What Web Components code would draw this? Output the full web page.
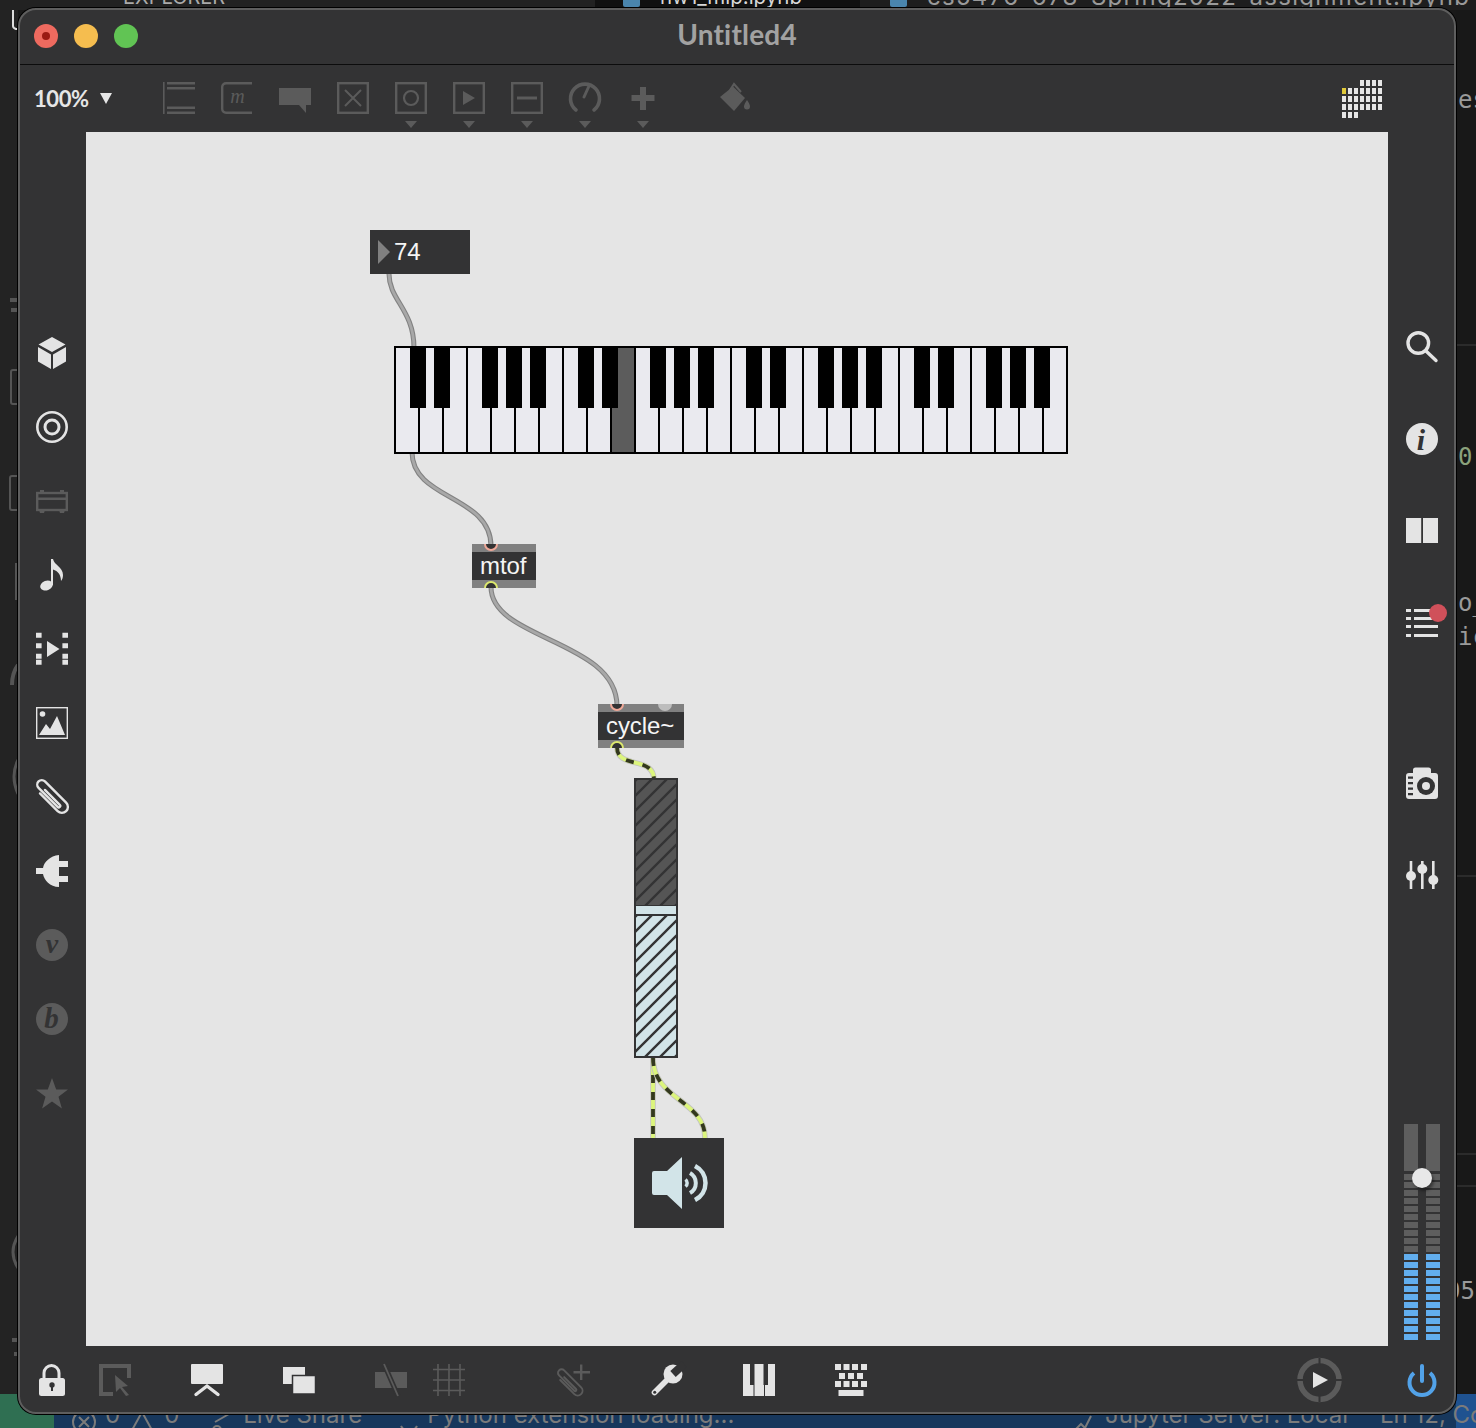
<!DOCTYPE html>
<html>
<head>
<meta charset="utf-8">
<title>Untitled4</title>
<style>
    html, body { margin: 0; padding: 0; background: #1c1c1c; }
    body { width: 1476px; height: 1428px; position: relative; overflow: hidden; font-family: "Lato", "Liberation Sans", sans-serif; }
</style>
</head>
<body>
<desk-backdrop></desk-backdrop>

<max-window>
    <span slot="title">Untitled4</span>

    <max-toolbar slot="toolbar">
        <tool-icon name="object" dim style="margin-left:50px"></tool-icon>
        <tool-icon name="message" dim></tool-icon>
        <tool-icon name="comment" dim></tool-icon>
        <tool-icon name="button" dim></tool-icon>
        <tool-icon name="toggle" dim menu></tool-icon>
        <tool-icon name="number" dim menu></tool-icon>
        <tool-icon name="slider" dim menu></tool-icon>
        <tool-icon name="dial" dim menu></tool-icon>
        <tool-icon name="plus" dim menu></tool-icon>
        <tool-icon name="bucket" dim style="margin-left:34px"></tool-icon>
    </max-toolbar>

    <side-bar slot="left" top="205" gap="42" style="padding-right:2px">
        <tool-icon name="cube"></tool-icon>
        <tool-icon name="target"></tool-icon>
        <tool-icon name="rack" dim></tool-icon>
        <tool-icon name="note"></tool-icon>
        <tool-icon name="film"></tool-icon>
        <tool-icon name="image"></tool-icon>
        <tool-icon name="clip"></tool-icon>
        <tool-icon name="plug"></tool-icon>
        <tool-icon name="vst" dim></tool-icon>
        <tool-icon name="beap" dim></tool-icon>
        <tool-icon name="star" dim></tool-icon>
    </side-bar>

    <patch-canvas slot="canvas">
        <max-object x="284" y="98" w="100" h="44" kind="number">74</max-object>
        <kslider-object x="308" y="214"></kslider-object>
        <max-object x="386" y="412" w="64" h="44" inlets="19">mtof</max-object>
        <max-object x="512" y="572" w="86" h="44" inlets="19 67">cycle~</max-object>
        <gain-object x="548" y="646"></gain-object>
        <ezdac-object x="548" y="1006"></ezdac-object>
    </patch-canvas>

    <side-bar slot="right" top="199" gap="60" style="padding-left:2px">
        <tool-icon name="search"></tool-icon>
        <tool-icon name="info"></tool-icon>
        <tool-icon name="book"></tool-icon>
        <tool-icon name="list"></tool-icon>
        <tool-icon name="camera" style="margin-top:68px"></tool-icon>
        <tool-icon name="mixer"></tool-icon>
        <level-meter></level-meter>
    </side-bar>

    <max-statusbar slot="bottom">
        <tool-icon name="lock" style="margin-left:16px"></tool-icon>
        <tool-icon name="select" dim style="margin-left:31px"></tool-icon>
        <tool-icon name="present" style="margin-left:60px"></tool-icon>
        <tool-icon name="windows" style="margin-left:60px"></tool-icon>
        <tool-icon name="snap" dim style="margin-left:60px"></tool-icon>
        <tool-icon name="grid" dim style="margin-left:26px"></tool-icon>
        <tool-icon name="clipadd" dim style="margin-left:94px"></tool-icon>
        <tool-icon name="wrench" style="margin-left:60px"></tool-icon>
        <tool-icon name="keys" style="margin-left:60px"></tool-icon>
        <tool-icon name="keyboard" style="margin-left:60px"></tool-icon>
        <tool-icon name="play" size="44" style="margin-left:430px"></tool-icon>
        <tool-icon name="power" style="margin-left:65px"></tool-icon>
    </max-statusbar>
</max-window>

<script>
const DARK = '#333334'

const f = 'fill="currentColor"'
const s = 'fill="none" stroke="currentColor"'
const boxed = `<rect x="1.200" y="1.200" width="29.600" height="29.600" ${s} stroke-width="2.400"/>`
const serif = 'font-family="Liberation Serif, serif" font-style="italic" font-weight="bold" text-anchor="middle"'
const clipShape = `<g transform="rotate(-45 16 16)" ${s} stroke-width="2.400" stroke-linecap="round"><path d="M10 5V30a6 6 0 0 0 12 0V0a4.500 4.500 0 0 0-9 0V27a1.500 1.500 0 0 0 3 0V6"/></g>`

const ICONS = {
    object: `<path ${f} d="M0 0h1.600v32H0zM4 0h28v2.400H4zM4 5h28v2.400H4zM4 24.600h28v2.400H4zM4 29.600h28v2.400H4z"/>`,
    message: `<path ${s} stroke-width="2.400" d="M31 1.200H5A3.800 3.800 0 0 0 1.200 5v22A3.800 3.800 0 0 0 5 30.800h26"/><text x="16.500" y="21" font-family="Liberation Serif, serif" font-style="italic" font-size="20" text-anchor="middle" fill="currentColor">m</text>`,
    comment: `<path ${f} d="M0 6h32v17h-5v8l-7-8H0z"/>`,
    button: `${boxed}<path ${s} stroke-width="2" d="M8 8l16 16M24 8L8 24"/>`,
    toggle: `${boxed}<circle cx="16" cy="16" r="7" ${s} stroke-width="2.200"/>`,
    number: `${boxed}<path ${f} d="M10 9l12 7-12 7z"/>`,
    slider: `${boxed}<path ${f} d="M6 14.500h20v3H6z"/>`,
    dial: `<path ${s} stroke-width="3.600" stroke-linecap="round" d="M7 28A14.500 14.500 0 1 1 25 28"/><path ${s} stroke-width="3" stroke-linecap="round" d="M15 15L20 4"/>`,
    plus: `<path ${f} d="M13 5h6v8h8.500v6H19v9h-6V19H4.500v-6H13z"/>`,
    bucket: `<path ${f} d="M1 15L14 4.500 26 16 15 29z"/><path ${s} stroke-width="2" d="M11 8l4-6 7 8"/><path ${f} d="M28 18c2 3 3 5 3 6.500a3 3 0 0 1-6 0c0-1.500 1-3.500 3-6.500z"/>`,

    cube: `<path ${f} d="M16 0l13.500 7.500L16 15 2.500 7.500zM2 10l13 7.500V32L2 24.500zM30 10v14.500L17 32V17.500z"/>`,
    target: `<circle cx="16" cy="16" r="14.700" ${s} stroke-width="2.600"/><circle cx="16" cy="16" r="7" ${s} stroke-width="3"/>`,
    rack: `<rect x="1.200" y="8" width="29.600" height="17" ${s} stroke-width="2.400"/><path ${f} d="M1 12.500h30v2.400H1zM4 5h4v3H4zM24 5h4v3h-4zM3 25h6l-1 3H4zM23 25h6l-1 3h-4z"/>`,
    note: `<ellipse cx="10.500" cy="26.500" rx="6.500" ry="4.800" transform="rotate(-20 10.500 26.500)" ${f}/><path ${f} d="M15 0h2c1 6 10 8 10 16 0 3-1 5-2 6 0-6-3-10-8-11.500V26h-2z"/>`,
    film: `<path ${f} d="M0 0h5.600v5H0zM0 10.500h5.600v5H0zM0 21h5.600v5H0zM26.400 0H32v5h-5.600zM26.400 10.500H32v5h-5.600zM26.400 21H32v5h-5.600zM0 27h5.600v5H0zM26.400 27H32v5h-5.600z" transform="translate(0 -0.300)"/><path ${f} d="M11 8l12.500 8L11 24z"/>`,
    image: `<rect x="0.700" y="0.700" width="30.600" height="30.600" ${s} stroke-width="1.400"/><circle cx="6.500" cy="7" r="2.800" ${f}/><path ${f} d="M3 28l7-11 4 5 7-13 8 19z"/>`,
    clip: clipShape,
    plug: `<path ${f} d="M0 13h8v6H0zM23 0v32c-9 0-15-7-16-13v-6C8 7 14 1 23 0zM23 6h9v6h-9zM23 21h9v6h-9z"/>`,
    vst: `<circle cx="16" cy="16" r="16" ${f}/><text x="16" y="24" ${serif} font-size="28" fill="${DARK}">v</text>`,
    beap: `<circle cx="16" cy="16" r="16" ${f}/><text x="15.500" y="25" ${serif} font-size="29" fill="${DARK}">b</text>`,
    star: `<path ${f} d="M16 1l4.200 11.600H32l-9.500 7.200 3.400 11.700L16 24.500 6.100 31.500l3.400-11.700L0 12.600h11.800z"/>`,

    search: `<circle cx="12.300" cy="12" r="10.300" ${s} stroke-width="3.400"/><path ${s} stroke-width="3.400" stroke-linecap="round" d="M20 20l10 9.500"/>`,
    info: `<circle cx="16" cy="16" r="16" ${f}/><text x="15" y="27" ${serif} font-size="30" fill="${DARK}">i</text>`,
    book: `<path ${f} d="M0 3h15.200v25H0zM17 3h15v25H17z"/>`,
    list: `<path ${f} d="M0 2h5v3H0zM8 2h24v3H8zM0 10h5v3H0zM8 10h24v3H8zM0 18h5v3H0zM8 18h24v3H8zM0 27h5v3H0zM8 27h24v3H8z"/><circle cx="32" cy="6" r="9" fill="#d0505a"/>`,
    camera: `<path ${f} d="M3 6h4V3a2.500 2.500 0 0 1 2.500-2.500h13A2.500 2.500 0 0 1 25 3v3h4a3 3 0 0 1 3 3v20a3 3 0 0 1-3 3H3a3 3 0 0 1-3-3V9a3 3 0 0 1 3-3z"/><circle cx="20" cy="19" r="9" fill="${DARK}"/><circle cx="20" cy="19" r="4" ${f}/><path fill="${DARK}" d="M2 9.500h5v2.200H2zM2 15h5v2.200H2zM2 20.500h5v2.200H2zM2 26h5v2.200H2z"/>`,
    mixer: `<path ${f} d="M3.700 2h2.600v28H3.700zM15 2h2.600v28H15zM26 2h2.600v28H26z"/><circle cx="5" cy="17" r="5" ${f}/><circle cx="16.300" cy="10" r="5" ${f}/><circle cx="27.300" cy="21" r="5" ${f}/>`,

    lock: `<path ${s} stroke-width="3" d="M8 15V9a7.500 7.500 0 0 1 15 0v6"/><rect x="3" y="14" width="26" height="18" rx="2.500" ${f}/><circle cx="16" cy="21" r="2.700" fill="${DARK}"/><path fill="${DARK}" d="M15 22h2v5h-2z"/>`,
    select: `<path ${s} stroke-width="4" d="M14 30H2V2h28v12"/><path ${f} d="M16 11l13 11-6 1 7 8-3 1-6-8-4 4z"/>`,
    present: `<rect x="0" y="0" width="32" height="20" rx="1" ${f}/><path ${s} stroke-width="3.400" stroke-linecap="round" d="M16 22L5 30.500M16 22l11 8.500"/>`,
    windows: `<rect x="0" y="3" width="22" height="17" ${f}/><rect x="9.500" y="11.500" width="23" height="18.500" ${f} stroke="${DARK}" stroke-width="1.500"/>`,
    snap: `<rect x="0" y="8" width="32" height="16" ${f}/><path stroke="${DARK}" stroke-width="5" d="M9 0l14 32"/><path stroke="currentColor" stroke-width="1.800" d="M9 0l14 32"/>`,
    grid: `<path ${s} stroke-width="1.600" d="M5 0v32M16 0v32M27 0v32M0 5.500h32M0 16h32M0 26.500h32"/>`,
    clipadd: `<g transform="translate(-2 6) scale(.8)">${clipShape}</g><path ${f} d="M21 0.500h2.400V7H31v2.400h-7.600V16H21V9.400h-6.500V7H21z"/>`,
    wrench: `<path ${s} stroke-width="5.600" stroke-linecap="round" d="M3.500 28.500L18 14"/><circle cx="22" cy="10" r="9.500" ${f}/><path stroke="${DARK}" stroke-width="8" d="M22 10L33 0"/><circle cx="3.700" cy="28.300" r="1.500" fill="${DARK}"/>`,
    keys: `<path ${f} d="M0 0h32v32H0z"/><path fill="${DARK}" d="M7 0h4.500v21H7zM20.500 0H25v21h-4.500zM10.500 21h1v11h-1zM21 21h1v11h-1z"/>`,
    keyboard: `<path ${f} d="M0 0h6v6H0zM8.500 0h6v6h-6zM17 0h6v6h-6zM26 0h6v6h-6zM4 9h6v6H4zM13 9h6v6h-6zM22 9h6v6h-6zM0 17h6v6H0zM8.500 17h6v6h-6zM17 17h6v6h-6zM26 17h6v6h-6zM3.500 26h25v6h-25z"/>`,
    play: `<circle cx="22.500" cy="22" r="19.500" fill="none" stroke="#5b5b5b" stroke-width="5.500"/><path stroke="${DARK}" stroke-width="2" d="M22.500 0v8M22.500 36v8M0 22h8M37 22h8"/><path ${f} d="M16 15l15 8-15 8z" transform="translate(0 -1)"/>`,
    power: `<g fill="none" stroke="#52a2e8" stroke-width="4" stroke-linecap="round"><path d="M8 9A12.500 12.500 0 1 0 24 9" stroke-linecap="butt"/><path d="M16 2v15"/></g>`,
}

class ToolIcon extends HTMLElement {
    connectedCallback() {
        const name = this.getAttribute('name')
        const size = this.getAttribute('size') || 32
        const color = this.hasAttribute('dim') ? '#5b5b5b' : '#e4e4e4'
        const shadow = this.attachShadow({ mode: 'open' })
        shadow.innerHTML = `
            <style>
                :host { display: flex; flex-direction: column; align-items: center; gap: 7px; flex: none; color: ${color}; }
                svg { display: block; overflow: visible; }
                .menu { width: 0; height: 0; border-left: 6.5px solid transparent; border-right: 6.5px solid transparent; border-top: 7px solid #5b5b5b; }
            </style>
            <svg width="${size}" height="${size}" viewBox="0 0 ${size} ${size}">${ICONS[name]}</svg>
            ${this.hasAttribute('menu') ? '<div class="menu"></div>' : ''}
        `
    }
}
customElements.define('tool-icon', ToolIcon)

class DeskBackdrop extends HTMLElement {
    constructor() {
        super()
        const shadow = this.attachShadow({ mode: 'open' })
        shadow.innerHTML = `
            <style>
                :host { display: flex; flex-direction: column; width: 1476px; height: 1428px; background: #191919; overflow: hidden; font-family: "Inter", "Liberation Sans", sans-serif; }
                .tabs { display: flex; height: 10px; flex: none; background: #1e1e1e; color: #9a9a9a; font-size: 24px; line-height: 24px; }
                .tabs span { display: block; margin-top: -15px; white-space: nowrap; }
                .explorer { width: 595px; background: #222; flex: none; padding-left: 123px; box-sizing: border-box; font-size: 20px; color: #aaa; }
                .tab { width: 265px; flex: none; background: #111; display: flex; padding-left: 28px; box-sizing: border-box; gap: 20px; color: #d8d8d8; font-size: 20.500px; }
                .file { width: 17px; height: 7px; background: #4a85ad; border-radius: 0 0 2px 2px; flex: none; }
                .other { display: flex; padding-left: 30px; gap: 20px; letter-spacing: 1.300px; }
                .main { flex: 1; display: flex; justify-content: space-between; min-height: 0; }
                .activity { width: 18px; background: #232323; color: #555; }
                .code { width: 20px; flex: none; position: relative; background: #181818; font-family: "DejaVu Sans Mono", monospace; font-size: 24px; color: #9a9a9a; }
                .code span { position: absolute; left: 2px; line-height: 28px; white-space: nowrap; }
                .code i { position: absolute; left: 0; right: 0; height: 2px; background: #2b2b2b; }
                .status { height: 34px; flex: none; display: flex; background: #17375c; color: #7b7b7b; font-size: 24px; line-height: 30px; position: relative; }
                .status .green { width: 54px; flex: none; background: #2f6f52; }
                .status .row { flex: 1; display: flex; align-items: flex-end; padding-left: 18px; white-space: nowrap; position: relative; }
                .status .row span { display: block; transform: translateY(2px); }
                .status .row svg { flex: none; margin-bottom: -6px; }
                .status .brand { position: absolute; right: 0; top: 0; bottom: 0; width: 20px; background: #1f5290; }
                .spacer { flex: 1; }
            </style>
            <div class="tabs">
                <span class="explorer">EXPLORER</span>
                <div class="tab"><div class="file"></div><span>hw1_mlp.ipynb</span></div>
                <div class="other"><div class="file"></div><span>cs5476-678-Spring2022-assignment.ipynb</span></div>
            </div>
            <div class="main">
                <div class="activity">
                    <svg width="18" height="1384" viewBox="0 0 18 1384" fill="none" stroke="#555" stroke-width="2">
                        <path stroke="#ddd" d="M13 -10V16q0 2 3 3h4M24 -10V-2M52 -10V-2"/>
                        <path d="M18 360h-5q-2 0-2 2v30q0 2 2 2h5M18 466h-6q-2 0-2 2v30q0 2 2 2h6M16 553v37"/>
                        <path stroke-width="4" d="M18 655q-6 8-6 20"/>
                        <path stroke-width="3" d="M18 750q-8 16 0 34M18 1226q-10 16 0 32"/>
                        <path stroke-width="4" d="M10 290h8M11 300h7M12 1330h6M14 1344h4"/>
                    </svg>
                </div>
                <div class="code">
                    <i style="top:334px"></i><i style="top:865px"></i><i style="top:1143px"></i><i style="top:1175px"></i>
                    <span style="top:76px">es</span>
                    <span style="top:433px;color:#8ba27c">0</span>
                    <span style="top:579px">o_</span>
                    <span style="top:613px">ic</span>
                    <span style="top:1267px;left:-10px">05.</span>
                </div>
            </div>
            <div class="status">
                <div class="brand"></div>
                <div class="green"></div>
                <div class="row">
                    <svg width="24" height="24" viewBox="0 0 24 24" fill="none" stroke="#7b7b7b" stroke-width="2"><circle cx="12" cy="12" r="11"/><path d="M7 7l10 10M17 7L7 17"/></svg>
                    <span style="margin-left:9px">0</span>
                    <svg style="margin-left:10px" width="24" height="24" viewBox="0 0 24 24" fill="none" stroke="#7b7b7b" stroke-width="2"><path d="M12 2l11 20H1z"/></svg>
                    <span style="margin-left:10px">0</span>
                    <svg style="margin-left:30px" width="24" height="24" viewBox="0 0 24 24" fill="none" stroke="#7b7b7b" stroke-width="2"><circle cx="8" cy="20" r="4"/><path d="M6 12l14-8"/></svg>
                    <span style="margin-left:10px">Live Share</span>
                    <svg style="margin-left:36px" width="22" height="24" viewBox="0 0 22 24" fill="none" stroke="#7b7b7b" stroke-width="2"><path d="M3 16a9 9 0 0 0 16 0"/></svg>
                    <span style="margin-left:7px">Python extension loading...</span>
                    <div class="spacer"></div>
                    <svg width="22" height="24" viewBox="0 0 22 24" fill="none" stroke="#7b7b7b" stroke-width="2"><path d="M2 22l8-8 4 4 6-12"/></svg>
                    <span style="margin-left:12px">Jupyter Server: Local</span>
                    <span style="margin-left:32px;width:96px;overflow:hidden">Ln 12, Col 1</span>
                </div>
            </div>
        `
    }
}
customElements.define('desk-backdrop', DeskBackdrop)

class MaxWindow extends HTMLElement {
    constructor() {
        super()
        const shadow = this.attachShadow({ mode: 'open' })
        shadow.innerHTML = `
            <style>
                :host {
                    position: absolute; left: 18px; top: 8px; width: 1438px; height: 1406px; box-sizing: border-box;
                    display: grid; grid-template-columns: 66px 1fr 66px; grid-template-rows: 54px 1px 67px 1fr 66px;
                    background: ${DARK}; border: 2px solid #5e5e5e; border-radius: 18px;
                    box-shadow: 0 0 0 1px #000; overflow: hidden;
                }
                .title { grid-column: 1 / 4; display: flex; align-items: center; position: relative; justify-content: center;
                    color: #a2a2a2; font: bold 28px "Lato", "Liberation Sans", sans-serif; letter-spacing: 0.200px; padding-bottom: 7px; box-sizing: border-box; }
                .lights { position: absolute; left: 14px; top: 14px; display: flex; gap: 16px; }
                .lights div { width: 24px; height: 24px; border-radius: 50%; display: flex; align-items: center; justify-content: center; }
                .red { background: #ee6a5f; } .yellow { background: #f5bd4f; } .green { background: #61c454; }
                .red::after { content: ''; width: 8px; height: 8px; border-radius: 50%; background: #9b1a13; }
                .line { grid-column: 1 / 4; background: #0c0c0c; }
                .top { grid-column: 1 / 4; }
                .bottom { grid-column: 1 / 4; }
            </style>
            <div class="title">
                <div class="lights"><div class="red"></div><div class="yellow"></div><div class="green"></div></div>
                <slot name="title"></slot>
            </div>
            <div class="line"></div>
            <div class="top"><slot name="toolbar"></slot></div>
            <slot name="left"></slot>
            <slot name="canvas"></slot>
            <slot name="right"></slot>
            <div class="bottom"><slot name="bottom"></slot></div>
        `
    }
}
customElements.define('max-window', MaxWindow)

class MaxToolbar extends HTMLElement {
    constructor() {
        super()
        const shadow = this.attachShadow({ mode: 'open' })
        shadow.innerHTML = `
            <style>
                :host { display: flex; height: 67px; box-sizing: border-box; padding: 17px 0 0 14px; position: relative; }
                .zoom { display: flex; align-items: center; height: 32px; gap: 11px; color: #e6e6e6; font: bold 22px "Lato", "Liberation Sans", sans-serif; letter-spacing: -0.4px; }
                .zoom::after { content: ''; width: 0; height: 0; border-left: 6px solid transparent; border-right: 6px solid transparent; border-top: 11px solid #e6e6e6; }
                .icons { display: flex; gap: 26px; align-items: flex-start; margin-left: 1px; }
                .patcher { position: absolute; right: 72px; top: 15px; display: grid; grid-template-columns: repeat(7, 4px); grid-auto-rows: 6px; gap: 2px; }
                .patcher i { background: #e6e6e6; }
            </style>
            <div class="zoom">100%</div>
            <div class="icons"><slot></slot></div>
            <div class="patcher"></div>
        `
        const grid = shadow.querySelector('.patcher')
        const rows = ['...xxxx', 'xxxxxxx', 'xxxxxxx', 'xxxxxxx', 'xxx....']
        rows.forEach((row, r) => {
            [...row].forEach((c, i) => {
                const cell = document.createElement('i')
                if (c === '.') cell.style.background = 'transparent'
                if (r === 1 && i === 0) cell.style.background = '#e0c93a'
                grid.appendChild(cell)
            })
        })
    }
}
customElements.define('max-toolbar', MaxToolbar)

class SideBar extends HTMLElement {
    connectedCallback() {
        const shadow = this.attachShadow({ mode: 'open' })
        shadow.innerHTML = `
            <style>
                :host { display: flex; flex-direction: column; align-items: center; min-height: 0;
                    padding-top: ${this.getAttribute('top')}px; gap: ${this.getAttribute('gap')}px; box-sizing: border-box; }
            </style>
            <slot></slot>
        `
    }
}
customElements.define('side-bar', SideBar)

class MaxStatusbar extends HTMLElement {
    constructor() {
        super()
        const shadow = this.attachShadow({ mode: 'open' })
        shadow.innerHTML = `
            <style>
                :host { display: flex; align-items: center; height: 66px; box-sizing: border-box; padding-top: 2px; }
            </style>
            <slot></slot>
        `
    }
}
customElements.define('max-statusbar', MaxStatusbar)

class LevelMeter extends HTMLElement {
    constructor() {
        super()
        const shadow = this.attachShadow({ mode: 'open' })
        const column = () => {
            let cells = '<div class="head"></div>'
            for (let i = 0; i < 10; i++) cells += '<i></i>'
            for (let i = 0; i < 11; i++) cells += '<i class="on"></i>'
            return `<div class="col">${cells}</div>`
        }
        shadow.innerHTML = `
            <style>
                :host { display: flex; gap: 8px; position: relative; margin-top: auto; margin-bottom: 6px; }
                .col { display: flex; flex-direction: column; gap: 2px; width: 14px; }
                .head { height: 47px; background: #5e5e5e; margin-bottom: 1px; }
                i { display: block; height: 6px; background: #5e5e5e; }
                i.on { background: #62aeee; }
                .knob { position: absolute; left: 8px; top: 44px; width: 20px; height: 20px; border-radius: 50%; background: #e8e8e8; box-shadow: 2px 3px 3px rgba(0,0,0,.4); }
            </style>
            ${column()}${column()}
            <div class="knob"></div>
        `
    }
}
customElements.define('level-meter', LevelMeter)

class PatchCanvas extends HTMLElement {
    constructor() {
        super()
        const shadow = this.attachShadow({ mode: 'open' })
        // cords use window coordinates, so the viewBox starts at the canvas corner
        const grey = [
            'M389 274C389 300 414 310 414 348',
            'M412 452C412 500 491 495 491 546',
            'M491 587C491 640 617 640 617 706',
        ]
        const signal = [
            'M617 747C617 770 654 755 654 780',
            'M653 1058V1138',
            'M653 1058C653 1100 705 1100 705 1138',
        ]
        const cords = grey.map(d => `
            <path d="${d}" stroke="#828282" stroke-width="5"/>
            <path d="${d}" stroke="#a8a8a8" stroke-width="2.800"/>`).join('') + signal.map(d => `
            <path d="${d}" stroke="#c4c4c0" stroke-width="5.600"/>
            <path d="${d}" stroke="#dcf57c" stroke-width="3.800"/>
            <path d="${d}" stroke="#33381f" stroke-width="3.800" stroke-dasharray="8 9"/>`).join('')
        shadow.innerHTML = `
            <style>
                :host { display: block; position: relative; background: #e5e5e5; overflow: hidden; }
                svg { position: absolute; left: 0; top: 0; }
            </style>
            <svg width="1302" height="1214" viewBox="86 132 1302 1214" fill="none">${cords}</svg>
            <slot></slot>
        `
    }
}
customElements.define('patch-canvas', PatchCanvas)

class MaxObject extends HTMLElement {
    connectedCallback() {
        const shadow = this.attachShadow({ mode: 'open' })
        const kind = this.getAttribute('kind')
        const inlets = (this.getAttribute('inlets') || '').split(' ').filter(Boolean)
        const ports = inlets.map((x, i) => `<div class="port ${i ? 'off' : 'in'}" style="left:${x - 7}px"></div>`).join('')
        const band = kind === 'number'
            ? ''
            : `${ports}<div class="port out" style="left:${inlets[0] - 7}px"></div>`
        shadow.innerHTML = `
            <style>
                :host {
                    position: absolute; left: ${this.getAttribute('x')}px; top: ${this.getAttribute('y')}px;
                    width: ${this.getAttribute('w')}px; height: ${this.getAttribute('h')}px; box-sizing: border-box;
                    background: ${DARK}; color: #f5f5f5; display: flex; align-items: center;
                    font: 24px "Liberation Sans", Arial, sans-serif; letter-spacing: -0.1px;
                    padding-left: ${kind === 'number' ? 24 : 8}px;
                    ${kind === 'number' ? '' : 'border-top: 8px solid #808080; border-bottom: 8px solid #808080;'}
                }
                .port { position: absolute; width: 10px; height: 10px; border-radius: 50%; background: ${DARK}; }
                .in { top: -7px; border: 2px solid #f0a898; }
                .out { bottom: -7px; border: 2px solid #dce86e; }
                .off { top: -7px; width: 14px; height: 14px; background: #bdbdbd; }
                .arrow { position: absolute; left: 8px; top: 10px; width: 0; height: 0; border-top: 12px solid transparent; border-bottom: 12px solid transparent; border-left: 12px solid #808080; }
                .clip { position: absolute; inset: -8px 0; overflow: hidden; }
            </style>
            <slot></slot>
            ${kind === 'number' ? '<div class="arrow"></div>' : `<div class="clip">${band}</div>`}
        `
    }
}
customElements.define('max-object', MaxObject)

class KsliderObject extends HTMLElement {
    connectedCallback() {
        const shadow = this.attachShadow({ mode: 'open' })
        const blackOffsets = [16, 40, 88, 112, 136]
        let keys = ''
        for (let i = 0; i < 28; i++) {
            const on = i === 9
            keys += `<rect x="${i * 24}" y="0" width="24" height="108" fill="${on ? '#5c5c5c' : '#eaeaef'}"/>`
            keys += `<rect x="${i * 24}" y="0" width="2" height="108" fill="#000"/>`
        }
        for (let oct = 0; oct < 4; oct++) {
            blackOffsets.forEach(b => {
                keys += `<rect x="${oct * 168 + b}" y="0" width="16" height="62" fill="#000"/>`
            })
        }
        // the played key keeps its colour up between the neighbouring black keys
        keys += `<rect x="224" y="0" width="16" height="62" fill="#5c5c5c"/>`
        shadow.innerHTML = `
            <style>
                :host { position: absolute; left: ${this.getAttribute('x')}px; top: ${this.getAttribute('y')}px; width: 674px; height: 108px; }
                svg { display: block; }
            </style>
            <svg width="674" height="108" viewBox="0 0 674 108">
                ${keys}
                <rect x="1" y="1" width="672" height="106" fill="none" stroke="#000" stroke-width="2"/>
            </svg>
        `
    }
}
customElements.define('kslider-object', KsliderObject)

class GainObject extends HTMLElement {
    connectedCallback() {
        const shadow = this.attachShadow({ mode: 'open' })
        const hatch = (id, bg) => `
            <pattern id="${id}" width="15" height="15" patternUnits="userSpaceOnUse">
                <rect width="15" height="15" fill="${bg}"/>
                <path d="M-3 3L3 -3M-3 18L18 -3M12 18L18 12" stroke="${DARK}" stroke-width="2.400"/>
            </pattern>`
        shadow.innerHTML = `
            <style>
                :host {
                    position: absolute; left: ${this.getAttribute('x')}px; top: ${this.getAttribute('y')}px;
                    width: 44px; height: 280px; box-sizing: border-box; border: 2px solid ${DARK};
                    display: flex; flex-direction: column; background: ${DARK};
                }
                svg { display: block; flex: none; }
                .knob { height: 8px; margin: 1px 0 2px; background: #d2e4e8; flex: none; }
            </style>
            <svg width="40" height="125"><defs>${hatch('up', '#555')}</defs><rect width="40" height="125" fill="url(#up)"/></svg>
            <div class="knob"></div>
            <svg width="40" height="140"><defs>${hatch('low', '#d2e4e8')}</defs><rect width="40" height="140" fill="url(#low)"/></svg>
        `
    }
}
customElements.define('gain-object', GainObject)

class EzdacObject extends HTMLElement {
    connectedCallback() {
        const shadow = this.attachShadow({ mode: 'open' })
        shadow.innerHTML = `
            <style>
                :host {
                    position: absolute; left: ${this.getAttribute('x')}px; top: ${this.getAttribute('y')}px;
                    width: 90px; height: 90px; background: ${DARK}; display: flex; align-items: center; justify-content: center;
                }
                svg { display: block; }
            </style>
            <svg width="90" height="90" viewBox="0 0 90 90">
                <path fill="#d2e4e8" d="M18 35a2 2 0 0 1 2-2h13l15-14v52L33 57H20a2 2 0 0 1-2-2z"/>
                <g fill="none" stroke="#d2e4e8">
                    <path d="M51.500 41.500a4.500 4.500 0 0 1 0 7" stroke-width="3.500"/>
                    <path d="M56 35a11.500 11.500 0 0 1 0 20" stroke-width="4"/>
                    <path d="M61 28a19 19 0 0 1 0 34" stroke-width="4.500"/>
                </g>
            </svg>
        `
    }
}
customElements.define('ezdac-object', EzdacObject)
</script>
</body>
</html>
